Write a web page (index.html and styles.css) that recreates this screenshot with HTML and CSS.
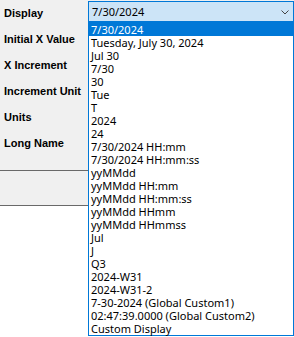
FILE: index.html
```html
<!DOCTYPE html>
<html lang="en">

<head>
    <meta charset="UTF-8">
    <title>Axis Properties</title>
    <link rel="stylesheet" href="styles.css">
</head>

<body>
    <div class="panel">
        <div class="form">
            <div class="row">
                <label class="label">Display</label>
                <div class="combo">
                    <span class="combo-value">7/30/2024</span>
                    <svg class="chevron" width="8" height="5" viewBox="0 0 8 5">
                        <path d="M0.5 0.5 L4 4 L7.5 0.5" fill="none" stroke="#444" stroke-width="1"/>
                    </svg>
                </div>
            </div>
            <div class="row"><label class="label">Initial X Value</label></div>
            <div class="row"><label class="label">X Increment</label></div>
            <div class="row"><label class="label">Increment Unit</label></div>
            <div class="row"><label class="label">Units</label></div>
            <div class="row"><label class="label">Long Name</label></div>
        </div>
        <div class="button-bar"></div>
    </div>

    <ul class="dropdown">
        <li class="selected">7/30/2024</li>
        <li>Tuesday, July 30, 2024</li>
        <li>Jul 30</li>
        <li>7/30</li>
        <li>30</li>
        <li>Tue</li>
        <li>T</li>
        <li>2024</li>
        <li>24</li>
        <li>7/30/2024 HH:mm</li>
        <li>7/30/2024 HH:mm:ss</li>
        <li>yyMMdd</li>
        <li>yyMMdd HH:mm</li>
        <li>yyMMdd HH:mm:ss</li>
        <li>yyMMdd HHmm</li>
        <li>yyMMdd HHmmss</li>
        <li>Jul</li>
        <li>J</li>
        <li>Q3</li>
        <li>2024-W31</li>
        <li>2024-W31-2</li>
        <li>7-30-2024 (Global Custom1)</li>
        <li>02:47:39.0000 (Global Custom2)</li>
        <li>Custom Display</li>
    </ul>
</body>

</html>
```

FILE: styles.css
```css
body {
    font-family: "Noto Sans", "Open Sans", sans-serif;
    font-size: 11px;
    margin: 0;
    background: white;
    color: #000;
    width: 294px;
    height: 337px;
    overflow: hidden;
    position: relative;
}

.panel {
    background: #f0f0f0;
}

.form {
    padding-bottom: 14px;
}

.row {
    display: grid;
    grid-template-columns: 88px 1fr;
    height: 26px;
}

.label {
    font-family: "Liberation Sans", Arial, sans-serif;
    font-size: 11px;
    font-weight: bold;
    line-height: 27px;
    padding-left: 4px;
    white-space: nowrap;
}

.combo {
    margin-top: 1px;
    height: 21px;
    box-sizing: border-box;
    border: 1px solid #0078d7;
    background: #cce4f7;
    display: flex;
    align-items: center;
    justify-content: space-between;
    padding: 0 4px 0 3px;
}

.combo-value {
    line-height: 19px;
}

.chevron {
    display: block;
    margin-top: 1px;
}

.button-bar {
    height: 34px;
    border-top: 1px solid #696969;
    border-bottom: 1px solid #696969;
}

.dropdown {
    position: absolute;
    left: 88px;
    top: 22px;
    width: 206px;
    box-sizing: border-box;
    margin: 0;
    padding: 0;
    list-style: none;
    background: white;
    border: 1px solid #0078d7;
}

.dropdown li {
    height: 13px;
    line-height: 13px;
    padding-left: 2px;
    white-space: nowrap;
}

.dropdown li.selected {
    background: #0078d7;
    color: white;
}
```
